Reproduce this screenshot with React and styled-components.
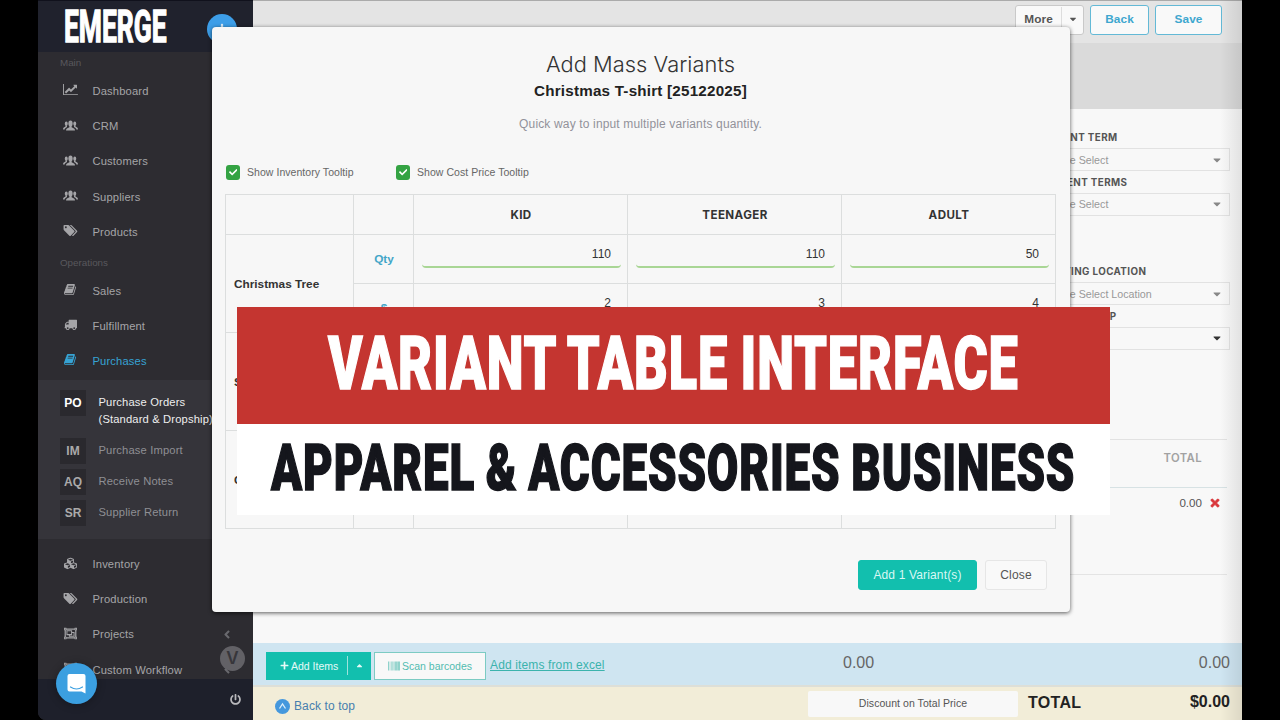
import styled, { createGlobalStyle } from 'styled-components';
import { FaCubes, FaRegObjectGroup, FaPowerOff, FaPlus, FaTimes, FaCheck, FaBarcode, FaCaretDown, FaCaretUp, FaAngleLeft } from 'react-icons/fa';

const GlobalStyle = createGlobalStyle`
  * {
    box-sizing: border-box;
  }
  body {
    margin: 0;
    background: #000;
    overflow: hidden;
    font-family: 'Liberation Sans', Arial, sans-serif;
  }
`;

const Screen = styled.div`
  position: relative;
  display: flex;
  width: 1280px;
  height: 720px;
  padding: 0 38px;
  overflow: hidden;
  background: #000;
`;

/* sidebar */
const Sidebar = styled.aside`
  display: flex;
  flex-direction: column;
  flex: 0 0 215px;
  height: 720px;
  background: #2d2c31;
  border-bottom-left-radius: 8px;
  overflow: hidden;
`;
const Brand = styled.div`
  position: relative;
  flex: 0 0 52px;
  padding: 10px 0 0 26px;
  background: #20222d;
  border-top: 1px solid #10111c;
`;
const Logo = styled.div`
  width: max-content;
  font: 700 44px/32px Roboto, sans-serif;
  color: #fff;
  -webkit-text-stroke: 1.4px #fff;
  transform: scaleX(0.6);
  transform-origin: left center;
`;
const PlusButton = styled.div`
  position: absolute;
  left: 169px;
  top: 13px;
  width: 30px;
  height: 30px;
  display: flex;
  align-items: center;
  justify-content: center;
  border-radius: 50%;
  background: #3d9ee8;
  color: #d8ecfb;
  font-size: 12px;
`;
const SectionLabel = styled.div`
  flex: none;
  height: 21.4px;
  padding-left: 22px;
  font-size: 9.8px;
  line-height: 22px;
  color: #59585d;
  margin-top: ${({ $top }) => $top || 0}px;
`;
const NavItem = styled.div`
  display: flex;
  align-items: center;
  flex: none;
  height: 35.2px;
  padding: 0 21px 0 25px;
  font-size: 11.2px;
  letter-spacing: 0.15px;
  color: ${({ $active }) => ($active ? '#36a3d4' : '#a5a5a8')};

  svg {
    width: 15px;
    height: 13px;
    margin-right: 14.5px;
    position: relative;
    top: -1px;
    flex: none;
  }
  span {
    flex: 1;
    white-space: nowrap;
  }
  svg.angle {
    width: 10px;
    margin: 0;
    top: 0;
    color: #69696e;
  }
`;
const NavGroup = styled.div`
  flex: none;
  margin-top: ${({ $top }) => $top || 0}px;
`;
const SubMenu = styled.div`
  flex: 0 0 159px;
  margin-top: 2px;
  padding: 10px 0 0 22px;
  background: #35343a;
`;
const SubItem = styled.div`
  display: flex;
  align-items: flex-start;
  height: ${({ $tall }) => ($tall ? 48 : 31)}px;
  font-size: 11.2px;
  letter-spacing: 0.15px;
  line-height: 17px;
  white-space: nowrap;
  color: ${({ $active }) => ($active ? '#eee' : '#8f8f94')};

  span {
    padding-top: 4px;
  }
`;
const Code = styled.b`
  flex: 0 0 26px;
  height: 26px;
  margin-right: 12.5px;
  background: #2a292e;
  color: ${({ $active }) => ($active ? '#fff' : '#aaa')};
  font-size: 12px;
  line-height: 27px;
  text-align: center;
  letter-spacing: 0;
`;
const SideFooter = styled.div`
  position: absolute;
  left: 38px;
  bottom: 0;
  width: 215px;
  height: 41px;
  display: flex;
  align-items: center;
  justify-content: flex-end;
  padding-right: 12.5px;
  background: #1e202b;
  border-bottom-left-radius: 8px;
  color: #b9b9bd;
  font-size: 11px;
`;
const ChatButton = styled.div`
  position: absolute;
  left: 56px;
  top: 663px;
  width: 41px;
  height: 41px;
  display: flex;
  align-items: center;
  justify-content: center;
  border-radius: 50%;
  background: #3b9fe0;
  box-shadow: 0 1px 8px rgba(0, 0, 0, 0.3);
`;
const VBadge = styled.div`
  position: absolute;
  left: 220px;
  top: 646px;
  width: 25px;
  height: 25px;
  border-radius: 50%;
  background: #626166;
  color: #37363b;
  font: 600 17px/24px Inter, sans-serif;
  text-align: center;
`;

/* order page behind the dialog */
const Page = styled.main`
  display: flex;
  flex-direction: column;
  flex: 1;
  width: 989px;
  background: #f8f8f8;
  position: relative;

  &::after {
    content: '';
    position: absolute;
    right: 0;
    top: 0;
    width: 22px;
    height: 100%;
    background: linear-gradient(90deg, transparent, rgba(0, 0, 0, 0.09));
  }
`;
const TopBar = styled.div`
  display: flex;
  justify-content: flex-end;
  gap: 6px;
  flex: 0 0 43px;
  padding: 4px 20px 0 0;
  background: #e4e4e4;
  border-top: 1px solid #aaa;
`;
const TopButton = styled.div`
  display: flex;
  align-items: center;
  justify-content: center;
  width: ${({ $width }) => $width}px;
  height: 30px;
  padding-bottom: 2px;
  border: 1px solid ${({ $plain }) => ($plain ? '#c9c9c9' : '#63b9d6')};
  border-radius: 3px;
  background: #f9f9f9;
  color: ${({ $plain }) => ($plain ? '#555' : '#3ea7cf')};
  font-size: 11.8px;
  font-weight: 700;
  letter-spacing: 0.1px;
`;
const MoreLabel = styled.span`
  flex: 1;
  text-align: center;
`;
const MoreArrow = styled.span`
  display: flex;
  align-items: center;
  justify-content: center;
  width: 22px;
  height: 25px;
  border-left: 1px solid #ddd;
  font-size: 10px;
`;
const GreyBand = styled.div`
  flex: 0 0 66px;
  background: #dadada;
`;
const Form = styled.div`
  display: flex;
  flex-direction: column;
  flex: 0 0 330px;
  align-self: flex-end;
  width: 209px;
  padding: 19px 12px 0 0;
`;
const Field = styled.div`
  flex: none;
  height: 44.6px;
  margin-bottom: ${({ $gap }) => $gap || 0}px;
`;
const FieldLabel = styled.div`
  height: 20px;
  padding-left: ${({ $indent }) => $indent}px;
  font: 700 9.8px/19px Inter, sans-serif;
  letter-spacing: 0.4px;
  color: #555;
  white-space: nowrap;
`;
const Select = styled.div`
  display: flex;
  align-items: center;
  justify-content: space-between;
  height: 23px;
  padding: 0 6px 0 9px;
  border: 1px solid #e2e2e2;
  font-size: 10.7px;
  color: #999;

  svg {
    font-size: 12px;
    color: ${({ $dark }) => ($dark ? '#333' : '#888')};
  }
`;
const Lines = styled.div`
  flex: 1;
  align-self: flex-end;
  width: 209px;
  margin-right: 15px;
`;
const LinesHead = styled.div`
  height: 49px;
  padding: 0 25px 0 0;
  border-top: 1px solid #e2e2e2;
  border-bottom: 1px solid #d7e2e4;
  font: 600 11.3px/37px Inter, sans-serif;
  letter-spacing: 0.4px;
  color: #a2a2a2;
  text-align: right;
`;
const LinesRow = styled.div`
  display: flex;
  align-items: center;
  justify-content: flex-end;
  gap: 7px;
  height: 87px;
  padding: 0 6px 57px 0;
  border-bottom: 1px solid #e4e4e4;
  font-size: 11.6px;
  color: #555;

  svg {
    color: #d9363a;
    font-size: 12px;
    stroke: #d9363a;
    stroke-width: 30px;
  }
`;
const ActionBar = styled.div`
  display: flex;
  align-items: center;
  flex: 0 0 42px;
  padding: 3px 12px 0 13px;
  background: #cfe5f1;
`;
const AddItems = styled.div`
  display: flex;
  align-items: center;
  width: 105px;
  height: 28px;
  padding-left: 14px;
  background: #12bfae;
  color: #e5faf7;
  font-size: 10.5px;

  svg {
    font-size: 9px;
    margin-right: 2px;
  }
  i {
    width: 1px;
    height: 19px;
    margin: 0 7px 0 9px;
    background: #9fe3dc;
  }
`;
const ScanButton = styled.div`
  display: flex;
  align-items: center;
  justify-content: center;
  gap: 2px;
  width: 112px;
  height: 28px;
  margin: 0 4px 0 3px;
  border: 1px solid #7ccbc3;
  background: #f8f8f8;
  color: #52bcb0;
  font-size: 10.5px;

  svg {
    font-size: 12px;
  }
`;
const ExcelLink = styled.div`
  width: 353px;
  padding-bottom: 2px;
  color: #3bb3ad;
  font-size: 12px;
  letter-spacing: 0.13px;
  text-decoration: underline;
`;
const Amount = styled.div`
  flex: ${({ $grow }) => ($grow ? 1 : 'none')};
  padding-bottom: 6px;
  font-size: 16px;
  color: #666;
`;
const TotalBar = styled.div`
  display: flex;
  align-items: center;
  flex: 0 0 35px;
  padding: 0 12px 0 22px;
  border-top: 2px solid #dddfd8;
  background: #f2edd8;
`;
const BackToTop = styled.div`
  display: flex;
  align-items: center;
  gap: 4px;
  width: 533px;
  padding-top: 5px;
  font-size: 12px;
  letter-spacing: 0.1px;
  color: #477fae;
`;
const Discount = styled.div`
  width: 210px;
  height: 26px;
  margin: 0 10px 0 0;
  background: #f8f8f8;
  border-radius: 2px;
  color: #555;
  font-size: 10.5px;
  letter-spacing: 0.05px;
  line-height: 25px;
  text-align: center;
`;
const GrandTotal = styled.b`
  flex: ${({ $grow }) => ($grow ? 1 : 'none')};
  padding-bottom: ${({ $grow }) => ($grow ? 2 : 4)}px;
  font-size: 16px;
  letter-spacing: ${({ $grow }) => ($grow ? 0.3 : 0)}px;
  color: #222;
`;

/* dialog */
const Dialog = styled.section`
  position: absolute;
  left: 212px;
  top: 27px;
  width: 858px;
  height: 585px;
  padding: 24px 14px 0 13px;
  border-radius: 4px;
  background: #f7f7f7;
  box-shadow: 0 1px 4px rgba(0, 0, 0, 0.65);
`;
const Title = styled.h2`
  margin: 0;
  font: 300 21.8px/27px Inter, sans-serif;
  letter-spacing: 0.05px;
  color: #333;
  text-align: center;
`;
const Subtitle = styled.h3`
  margin: 0;
  font-size: 15.2px;
  letter-spacing: 0.22px;
  line-height: 25px;
  color: #222;
  text-align: center;
`;
const Hint = styled.p`
  margin: 12px 0 32px;
  font-size: 12px;
  letter-spacing: 0.15px;
  line-height: 18px;
  color: #92929a;
  text-align: center;
`;
const Checks = styled.div`
  display: flex;
  align-items: center;
  height: 15px;
  margin-bottom: 14px;
`;
const Check = styled.div`
  display: flex;
  align-items: center;
  width: 170px;
  padding-left: 1px;
  margin-top: -1px;
  font-size: 10.5px;
  letter-spacing: 0.05px;
  white-space: nowrap;
  color: #666;
`;
const Box = styled.span`
  display: flex;
  align-items: center;
  justify-content: center;
  width: 14px;
  height: 15px;
  margin-right: 7px;
  border-radius: 3px;
  background: #34a343;
  color: #fff;
  font-size: 8.5px;
`;
const Table = styled.div`
  display: grid;
  grid-template-columns: 128px 60px 214px 214px 214px;
  grid-template-rows: 40px repeat(6, 49px);
  width: 831px;
  border-left: 1px solid #dcdede;
  border-top: 1px solid #dcdede;
`;
const Cell = styled.div`
  display: flex;
  align-items: center;
  justify-content: ${({ $left }) => ($left ? 'flex-start' : 'center')};
  padding-left: ${({ $left }) => ($left ? 8 : 1)}px;
  grid-row: span ${({ $span }) => $span || 1};
  border-right: 1px solid #dcdede;
  border-bottom: 1px solid #dcdede;
  font-size: 11.8px;
  font-weight: 700;
  color: ${({ $blue }) => ($blue ? '#43a6c8' : '#333')};
`;
const HeadCell = styled(Cell)`
  font: 700 11.6px Inter, sans-serif;
  letter-spacing: 0.4px;
`;
const InputCell = styled(Cell)`
  align-items: flex-start;
  padding: 4px 6px 0 8px;
`;
const NumberInput = styled.div`
  width: 100%;
  height: 29px;
  padding-right: 10px;
  border-bottom: 2px solid #a9d695;
  border-radius: 4px;
  font-size: 12px;
  font-weight: 400;
  line-height: 31px;
  text-align: right;
  color: #333;
`;
const DialogActions = styled.div`
  display: flex;
  justify-content: flex-end;
  gap: 8px;
  padding: 31px 9px 0 0;
`;
const DialogButton = styled.div`
  width: ${({ $primary }) => ($primary ? 119 : 62)}px;
  height: 30px;
  border: 1px solid ${({ $primary }) => ($primary ? '#12bfae' : '#e6e6e6')};
  border-radius: 3px;
  background: ${({ $primary }) => ($primary ? '#12bfae' : '#f9f9f9')};
  color: ${({ $primary }) => ($primary ? '#d9f8f4' : '#555')};
  font-size: 12px;
  letter-spacing: 0.15px;
  line-height: 28px;
  text-align: center;
`;

/* headline banner */
const Banner = styled.div`
  position: absolute;
  left: 237px;
  top: 307px;
  width: 873px;
`;
const BannerLine = styled.div`
  display: flex;
  align-items: center;
  justify-content: center;
  height: ${({ $red }) => ($red ? 117 : 91)}px;
  padding-bottom: ${({ $red }) => ($red ? 4 : 2)}px;
  background: ${({ $red }) => ($red ? '#c43530' : '#fff')};
  color: ${({ $red }) => ($red ? '#fff' : '#15161c')};
  white-space: nowrap;

  span {
    font: 900 ${({ $red }) => ($red ? 74 : 64)}px/1 Roboto, sans-serif;
    letter-spacing: 1.2px;
    word-spacing: -2px;
    -webkit-text-stroke: 1.5px currentColor;
    transform: scaleX(${({ $red }) => ($red ? 0.707 : 0.714)});
  }
`;

const glyphs = {
  chart: [2048, 'M2048 1536v128h-2048v-1536h128v1408h1920zm-128-1248v435q0 21-19.5 29.5t-35.5-7.5l-121-121-633 633q-10 10-23 10t-23-10l-233-233-416 416-192-192 585-585q10-10 23-10t23 10l233 233 464-464-121-121q-16-16-7.5-35.5t29.5-19.5h435q14 0 23 9t9 23z'],
  tags: [1920, 'M448 448q0-53-37.5-90.5t-90.5-37.5-90.5 37.5-37.5 90.5 37.5 90.5 90.5 37.5 90.5-37.5 37.5-90.5zm1067 576q0 53-37 90l-491 492q-39 37-91 37-53 0-90-37l-715-716q-38-37-64.5-101t-26.5-117v-416q0-52 38-90t90-38h416q53 0 117 26.5t102 64.5l715 714q37 39 37 91zm384 0q0 53-37 90l-491 492q-39 37-91 37-36 0-59-14t-53-45l470-470q37-37 37-90 0-52-37-91l-715-714q-38-38-102-64.5t-117-26.5h224q53 0 117 26.5t102 64.5l715 714q37 39 37 91z'],
  book: [1792, 'M1639 478q40 57 18 129l-275 906q-19 64-76.5 107.5t-122.5 43.5h-923q-77 0-148.5-53.5t-99.5-131.5q-24-67-2-127 0-4 3-27t4-37q1-8-3-21.5t-3-19.5q2-11 8-21t16.5-23.5 16.5-23.5q23-38 45-91.5t30-91.5q3-10 .5-30t-.5-28q3-11 17-28t17-23q21-36 42-92t25-90q1-9-2.5-32t.5-28q4-13 22-30.5t22-22.5q19-26 42.5-84.5t27.5-96.5q1-8-3-25.5t-2-26.5q2-8 9-18t18-23 17-21q8-12 16.5-30.5t15-35 16-36 19.5-32 26.5-23.5 36-11.5 47.5 5.5l-1 3q38-9 51-9h761q74 0 114 56t18 130l-274 906q-36 119-71.5 153.5t-128.5 34.5h-869q-27 0-38 15-11 16-1 43 24 70 144 70h923q29 0 56-15.5t35-41.5l300-987q7-22 5-57 38 15 59 43zm-1064 2q-4 13 2 22.5t20 9.5h608q13 0 25.5-9.5t16.5-22.5l21-64q4-13-2-22.5t-20-9.5h-608q-13 0-25.5 9.5t-16.5 22.5zm-83 256q-4 13 2 22.5t20 9.5h608q13 0 25.5-9.5t16.5-22.5l21-64q4-13-2-22.5t-20-9.5h-608q-13 0-25.5 9.5t-16.5 22.5z'],
  truck: [1792, 'M640 1408q0-52-38-90t-90-38-90 38-38 90 38 90 90 38 90-38 38-90zm-384-512h384v-256h-158q-13 0-22 9l-195 195q-9 9-9 22v30zm1280 512q0-52-38-90t-90-38-90 38-38 90 38 90 90 38 90-38 38-90zm256-1088v1024q0 15-4 26.5t-13.5 18.5-16.5 11.5-23.5 6-22.5 2-25.5 0-22.5-.5q0 106-75 181t-181 75-181-75-75-181h-384q0 106-75 181t-181 75-181-75-75-181h-64q-3 0-22.5.5t-25.5 0-22.5-2-23.5-6-16.5-11.5-13.5-18.5-4-26.5q0-26 19-45t45-19v-320q0-8-.5-35t0-38 2.5-34.5 6.5-37 14-30.5 22.5-30l198-198q19-19 50.5-32t58.5-13h160v-192q0-26 19-45t45-19h1024q26 0 45 19t19 45z'],
};

const Glyph = ({ name }) => (
  <svg viewBox={`0 0 ${glyphs[name][0]} 1792`} fill="currentColor">
    <path d={glyphs[name][1]} />
  </svg>
);

const People = () => (
  <svg viewBox="0 0 30 24" fill="currentColor">
    <ellipse cx="15" cy="8" rx="4.3" ry="6" />
    <path d="M12.8 12h4.4v3.5l4.8 2.3q2 1 2 4.2H6q0-3.2 2-4.2l4.8-2.3z" />
    <ellipse cx="6.5" cy="8.5" rx="3" ry="4.3" />
    <path d="M5 12h3v3l-3 2q-1.5 1-1.8 3H0q0-3.5 1.5-4.2L5 14z" />
    <ellipse cx="23.5" cy="8.5" rx="3" ry="4.3" />
    <path d="M25 12h-3v3l3 2q1.5 1 1.8 3H30q0-3.5-1.5-4.2L25 14z" />
  </svg>
);

const NavLink = ({ icon, label, active, angle }) => (
  <NavItem $active={active}>
    {icon}
    <span>{label}</span>
    {angle && <FaAngleLeft className="angle" />}
  </NavItem>
);

const rows = [
  { name: 'Christmas Tree', labels: ['Qty', '$'], qty: [110, 110, 50], price: [2, 3, 4] },
  { name: 'S', labels: [], qty: ['', '', ''], price: ['', '', ''] },
  { name: 'C', labels: [], qty: ['', '', ''], price: ['', '', ''] },
];

const VariantRow = ({ name, labels, qty, price }) => (
  <>
    <Cell $left $span={2}>{name}</Cell>
    <Cell $blue>{labels[0]}</Cell>
    {qty.map((value, i) => (
      <InputCell key={i}><NumberInput>{value}</NumberInput></InputCell>
    ))}
    <Cell $blue>{labels[1]}</Cell>
    {price.map((value, i) => (
      <InputCell key={i}><NumberInput>{value}</NumberInput></InputCell>
    ))}
  </>
);

export default function App() {
  return (
    <Screen>
      <GlobalStyle />
      <Sidebar>
        <Brand>
          <Logo>EMERGE</Logo>
          <PlusButton><FaPlus /></PlusButton>
        </Brand>
        <SectionLabel>Main</SectionLabel>
        <NavGroup>
          <NavLink icon={<Glyph name="chart" />} label="Dashboard" />
          <NavLink icon={<People />} label="CRM" />
          <NavLink icon={<People />} label="Customers" />
          <NavLink icon={<People />} label="Suppliers" />
          <NavLink icon={<Glyph name="tags" />} label="Products" />
        </NavGroup>
        <SectionLabel $top={2.2}>Operations</SectionLabel>
        <NavGroup>
          <NavLink icon={<Glyph name="book" />} label="Sales" />
          <NavLink icon={<Glyph name="truck" />} label="Fulfillment" />
          <NavLink icon={<Glyph name="book" />} label="Purchases" active />
        </NavGroup>
        <SubMenu>
          <SubItem $tall $active>
            <Code $active>PO</Code>
            <span>Purchase Orders<br />(Standard &amp; Dropship)</span>
          </SubItem>
          <SubItem><Code>IM</Code><span>Purchase Import</span></SubItem>
          <SubItem><Code>AQ</Code><span>Receive Notes</span></SubItem>
          <SubItem><Code>SR</Code><span>Supplier Return</span></SubItem>
        </SubMenu>
        <NavGroup $top={7}>
          <NavLink icon={<FaCubes />} label="Inventory" />
          <NavLink icon={<Glyph name="tags" />} label="Production" />
          <NavLink icon={<FaRegObjectGroup />} label="Projects" angle />
          <NavLink icon={<FaRegObjectGroup />} label="Custom Workflow" angle />
        </NavGroup>
      </Sidebar>
      <Page>
        <TopBar>
          <TopButton $plain $width={69}>
            <MoreLabel>More</MoreLabel>
            <MoreArrow><FaCaretDown /></MoreArrow>
          </TopButton>
          <TopButton $width={59}>Back</TopButton>
          <TopButton $width={67}>Save</TopButton>
        </TopBar>
        <GreyBand />
        <Form>
          <Field>
            <FieldLabel $indent={1}>PAYMENT TERM</FieldLabel>
            <Select>Please Select<FaCaretDown /></Select>
          </Field>
          <Field $gap={45}>
            <FieldLabel $indent={4}>PAYMENT TERMS</FieldLabel>
            <Select>Please Select<FaCaretDown /></Select>
          </Field>
          <Field>
            <FieldLabel $indent={0}>RECEIVING LOCATION</FieldLabel>
            <Select>Please Select Location<FaCaretDown /></Select>
          </Field>
          <Field>
            <FieldLabel $indent={30}>DROPSHIP</FieldLabel>
            <Select $dark><span /><FaCaretDown /></Select>
          </Field>
        </Form>
        <Lines>
          <LinesHead>TOTAL</LinesHead>
          <LinesRow>0.00 <FaTimes /></LinesRow>
        </Lines>
        <ActionBar>
          <AddItems><FaPlus />Add Items<i /><FaCaretUp /></AddItems>
          <ScanButton><FaBarcode />Scan barcodes</ScanButton>
          <ExcelLink>Add items from excel</ExcelLink>
          <Amount $grow>0.00</Amount>
          <Amount>0.00</Amount>
        </ActionBar>
        <TotalBar>
          <BackToTop>
            <svg width="15" height="15" viewBox="0 0 15 15">
              <circle cx="7.5" cy="7.5" r="7.5" fill="#4598dd" />
              <path d="M4.5 9.5 7.5 5 10.5 9.5" fill="none" stroke="#dceefa" strokeWidth="1.3" />
            </svg>
            Back to top
          </BackToTop>
          <Discount>Discount on Total Price</Discount>
          <GrandTotal $grow>TOTAL</GrandTotal>
          <GrandTotal>$0.00</GrandTotal>
        </TotalBar>
      </Page>
      <SideFooter><FaPowerOff /></SideFooter>
      <VBadge>V</VBadge>
      <ChatButton>
        <svg width="19" height="21" viewBox="0 0 19 21">
          <path d="M2.5 1h14q2 0 2 2v17.5l-4-2h-12q-2 0-2-2V3q0-2 2-2z" fill="#fff" />
          <path d="M3.5 14q6 4 12 0" fill="none" stroke="#3b9fe0" strokeWidth="1.2" strokeLinecap="round" />
        </svg>
      </ChatButton>
      <Dialog>
        <Title>Add Mass Variants</Title>
        <Subtitle>Christmas T-shirt [25122025]</Subtitle>
        <Hint>Quick way to input multiple variants quantity.</Hint>
        <Checks>
          <Check><Box><FaCheck /></Box>Show Inventory Tooltip</Check>
          <Check><Box><FaCheck /></Box>Show Cost Price Tooltip</Check>
        </Checks>
        <Table>
          <HeadCell />
          <HeadCell />
          <HeadCell>KID</HeadCell>
          <HeadCell>TEENAGER</HeadCell>
          <HeadCell>ADULT</HeadCell>
          {rows.map((row) => <VariantRow key={row.name} {...row} />)}
        </Table>
        <DialogActions>
          <DialogButton $primary>Add 1 Variant(s)</DialogButton>
          <DialogButton>Close</DialogButton>
        </DialogActions>
      </Dialog>
      <Banner>
        <BannerLine $red><span>VARIANT TABLE INTERFACE</span></BannerLine>
        <BannerLine><span>APPAREL &amp; ACCESSORIES BUSINESS</span></BannerLine>
      </Banner>
    </Screen>
  );
}
